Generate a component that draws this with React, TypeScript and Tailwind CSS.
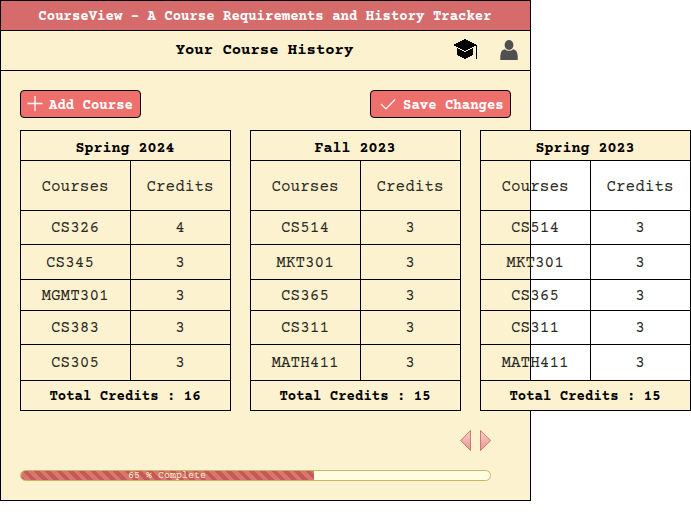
type Row = { course: string; credits: number; nudge?: boolean };
type Term = { name: string; rows: Row[]; total: number };

const fallRows: Row[] = [
  { course: 'CS514', credits: 3 },
  { course: 'MKT301', credits: 3 },
  { course: 'CS365', credits: 3 },
  { course: 'CS311', credits: 3 },
  { course: 'MATH411', credits: 3 },
];

const terms: Term[] = [
  {
    name: 'Spring 2024',
    rows: [
      { course: 'CS326', credits: 4 },
      { course: 'CS345', credits: 3, nudge: true },
      { course: 'MGMT301', credits: 3 },
      { course: 'CS383', credits: 3 },
      { course: 'CS305', credits: 3 },
    ],
    total: 16,
  },
  { name: 'Fall 2023', rows: fallRows, total: 15 },
  { name: 'Spring 2023', rows: fallRows, total: 15 },
];

const rowHeights = ['h-[34px]', 'h-[35px]', 'h-[31px]', 'h-[34px]', 'h-[36px]'];
const cellPads = ['', 'pt-px', 'pt-px', '', ''];

function TermTable({ term }: { term: Term }) {
  return (
    <section className="w-[211px] shrink-0 border border-black">
      <h2 className="flex h-[30px] items-center justify-center border-b border-black bg-[#fdf2d0] pr-px pt-1.5 text-[15px] font-bold leading-none">
        {term.name}
      </h2>
      <div className="flex h-[50px] border-b border-black text-base leading-none text-[#2c2a22]">
        <div className="flex w-[110px] items-center justify-center border-r border-black pr-px pt-0.5">Courses</div>
        <div className="flex flex-1 items-center justify-center pr-px pt-0.5">Credits</div>
      </div>
      {term.rows.map((row, i) => (
        <div key={row.course} className={`flex border-b border-black text-base leading-none text-[#2c2a22] ${rowHeights[i]}`}>
          <div className={`flex w-[110px] items-center justify-center border-r border-black ${cellPads[i]} ${row.nudge ? 'pr-[11px]' : 'pr-px'}`}>
            {row.course}
          </div>
          <div className={`flex flex-1 items-center justify-center pr-px ${cellPads[i]}`}>{row.credits}</div>
        </div>
      ))}
      <div className="flex h-[29px] items-center justify-center bg-[#fdf2d0] pr-px pt-0.5 text-sm font-bold leading-none">
        Total Credits : {term.total}
      </div>
    </section>
  );
}

function CapIcon() {
  return (
    <svg className="-mt-0.5 h-[21px] w-[25px]" viewBox="0 0 25 21" shapeRendering="crispEdges">
      <path d="M0 6 L12 0 L24 6 L12 12 Z" />
      <path d="M4 8.8 L12 12.8 L20 8.8 V16 L12 20 L4 16 Z" />
      <path d="M23 6 H24 V20 H23 Z" />
    </svg>
  );
}

function PersonIcon() {
  return (
    <svg className="h-5 w-[18px]" viewBox="0 0 18 20" fill="#505050">
      <ellipse cx="9" cy="5" rx="4.4" ry="5" />
      <path d="M0.3 20 V16 Q0.5 10 4.7 9.2 Q9 12.4 13.3 9.2 Q17.5 10 17.7 16 V20 Z" />
    </svg>
  );
}

export default function App() {
  return (
    <div className="h-[531px] w-[691px] overflow-hidden bg-white font-['Courier_Prime','Courier_New','Liberation_Mono',monospace] text-black">
      <main className="flex h-[501px] w-[531px] flex-col border border-black bg-[#fdf2d0]">
        <h1 className="flex h-[30px] shrink-0 items-center justify-center border-b border-black bg-[#d56c6b] pr-px pt-0.5 text-sm font-bold leading-none text-white">
          CourseView - A Course Requirements and History Tracker
        </h1>
        <header className="grid h-10 shrink-0 grid-cols-[1fr_auto_1fr] items-center border-b border-black">
          <h2 className="col-start-2 pr-0.5 text-[15.6px] font-bold leading-none">Your Course History</h2>
          <div className="-mt-px flex items-center justify-end gap-[22px] pr-3">
            <CapIcon />
            <PersonIcon />
          </div>
        </header>

        <div className="flex flex-col pl-[19px] pt-[19px]">
          <div className="flex w-[491px] justify-between text-sm font-bold leading-none text-white">
            <button className="flex h-7 w-[121px] items-center rounded-[4px] border border-black bg-[#ee706d] pl-1.5">
              <svg className="mr-[6px] h-4 w-4" viewBox="0 0 16 16" stroke="#fff" strokeWidth="1.3">
                <path d="M0.5 7.5 H15.5 M8 0 V15" />
              </svg>
              <span className="pt-[3px]">Add Course</span>
            </button>
            <button className="flex h-7 w-[141px] items-center rounded-[4px] border border-black bg-[#ee706d] pl-[9px]">
              <svg className="mr-[7px] h-4 w-4" viewBox="0 0 16 16" fill="none" stroke="#fff" strokeWidth="1.2">
                <path d="M1 8 L6 13 L15 3.5" />
              </svg>
              <span className="pt-[3px]">Save Changes</span>
            </button>
          </div>

          <div className="mt-3 flex gap-[19px]">
            {terms.map((term) => (
              <TermTable key={term.name} term={term} />
            ))}
          </div>

          <nav className="mt-[18px] flex w-[472px] justify-end gap-[8px]">
            <svg className="h-[23px] w-3" viewBox="0 0 12 23" fill="url(#rose)" stroke="#b85450">
              <defs>
                <linearGradient id="rose" x1="0" y1="0" x2="0" y2="1">
                  <stop offset="0" stopColor="#f8cecc" />
                  <stop offset="1" stopColor="#ea9590" />
                </linearGradient>
              </defs>
              <path strokeWidth="0.7" d="M10.5 1.5 V21.5 L0.7 11.5 Z" />
            </svg>
            <svg className="h-[23px] w-3" viewBox="0 0 12 23" fill="url(#rose)" stroke="#b85450">
              <path strokeWidth="0.7" d="M0.5 1.5 V21.5 L10.7 11.5 Z" />
            </svg>
          </nav>

          <div className="mt-[18px] flex h-[11px] w-[471px] overflow-hidden rounded-full border border-[#c9b765] bg-[#fffde0]">
            <div className="-my-px -ml-px flex w-[294px] items-center justify-center border-y border-[#c46a50] bg-[repeating-linear-gradient(45deg,#c85856_0px,#c85856_4px,#d67770_4px,#d67770_8px)] pt-px text-[10px] leading-none text-[#fbe9d0]">
              65 % Complete
            </div>
          </div>
        </div>
      </main>
    </div>
  );
}
